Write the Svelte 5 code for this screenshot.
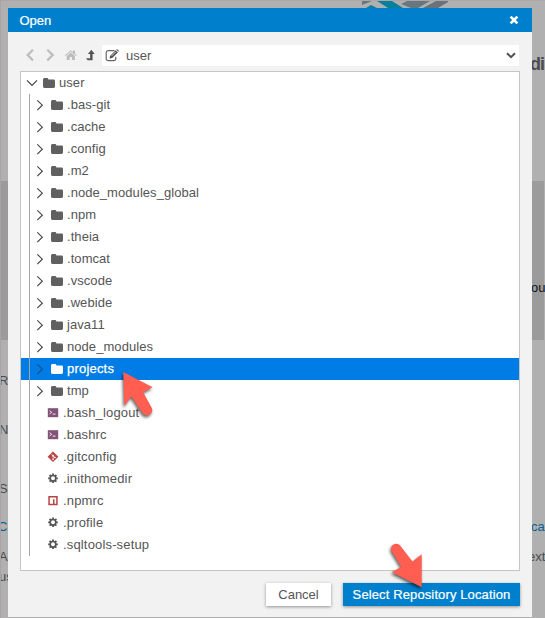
<script>
  const rows = [
    ['folder', '.bas-git'], ['folder', '.cache'], ['folder', '.config'], ['folder', '.m2'],
    ['folder', '.node_modules_global'], ['folder', '.npm'], ['folder', '.theia'], ['folder', '.tomcat'],
    ['folder', '.vscode'], ['folder', '.webide'], ['folder', 'java11'], ['folder', 'node_modules'],
    ['folder', 'projects'], ['folder', 'tmp'], ['shell', '.bash_logout'], ['shell', '.bashrc'],
    ['git', '.gitconfig'], ['gear', '.inithomedir'], ['npm', '.npmrc'], ['gear', '.profile'],
    ['gear', '.sqltools-setup']
  ];
  const selected = 'projects';
</script>

{#snippet folder()}
  <svg class="folder" width="12" height="11" viewBox="0 0 12 11"><path fill="currentColor" d="M0 1.5Q0 0 1.4 0H4Q5.2 0 5.3 1.2V1.4H10.6Q12 1.4 12 2.8V8.6Q12 10 10.6 10H1.4Q0 10 0 8.6Z" /></svg>
{/snippet}

<div class="page">
  <svg class="brand" width="86" height="7" viewBox="0 0 86 7">
    <path fill="#66777f" d="M0 0H10L0 4ZM45 0H68L56 7H49L39 3Z" />
    <path fill="#087f9b" d="M15 0H30L41 7H26ZM4 7L9 4L15 7Z" />
    <path fill="#69737d" d="M74 0H86V1L76 7H61Z" />
  </svg>
  <div class="band"></div>
  <span class="heading" style="left:530px;top:53px">di</span>
  <span class="dark" style="left:531px;top:280px">ou</span>
  <span style="left:-1px;top:373px">Re</span>
  <span style="left:-1px;top:422px">Ne</span>
  <span style="left:-1px;top:481px">Sa</span>
  <span class="link" style="left:-2px;top:519px">Cl</span>
  <span style="left:-1px;top:549px">A</span>
  <span style="left:-1px;top:569px">us</span>
  <span class="link" style="left:531px;top:519px">ca</span>
  <span style="left:528px;top:549px">ext</span>

  <section class="dialog">
    <header><span>Open</span>
      <svg width="10" height="10" viewBox="0 0 10 10"><path d="M1.6 1.6 8.4 8.4M8.4 1.6 1.6 8.4" stroke="#fff" stroke-width="2.7" /></svg>
    </header>
    <div class="content">
      <nav>
        <svg width="82" height="21" viewBox="0 0 82 21">
          <g fill="none" stroke="#bdbdbd" stroke-width="2.2"><path d="M13 4.8 7.6 10.1 13 15.4M27.3 4.8 32.7 10.1 27.3 15.4" /></g>
          <path fill="#bdbdbd" d="M44.8 10.3 50.8 5.3 53 7.1V5.6H55V8.8L56.8 10.3 56.1 11 50.8 6.6 45.5 11ZM46.7 11 50.8 7.6 54.9 11V15H52V12H49.7V15H46.7Z" />
          <path fill="#555" d="M71.3 4.7 74.8 9H72.6V15.2H67.7L66 13.2H70.1V9H67.9Z" />
        </svg>
        <div class="select">
          <svg width="15" height="13" viewBox="0 0 15 13"><path fill="none" stroke="#666" stroke-width="1.2" d="M9.5 1.6H3.5Q1.2 1.6 1.2 4V9.5Q1.2 11.7 3.5 11.7H8.5Q10.8 11.7 10.8 9.5V7.8" /><path fill="#555" d="M4.5 9.5 5 7 10.7 1.2 12.9 3.4 7.2 9ZM11.3.7 12 0 14 2 13.4 2.8Z" /><path stroke="white" stroke-width=".7" d="M6.5 7 10.5 3" /></svg>
          <span>user</span>
          <svg class="down" width="10" height="7" viewBox="0 0 10 7"><path d="M1 1.2 5 5.2 9 1.2" fill="none" stroke="#505050" stroke-width="2" /></svg>
        </div>
      </nav>
      <div class="tree">
        <div class="row root">
          <svg class="chev" width="12" height="10" viewBox="0 0 12 10"><path d="M1 2.4 6 7.5 11 2.4" fill="none" stroke="#444" stroke-width="1.15" /></svg>
          {@render folder()}<span>user</span>
        </div>
        <div class="children">
          {#each rows as [kind, name]}
            <div class="row" class:selected={name === selected} class:file={kind !== 'folder'}>
              {#if kind === 'folder'}
                <svg class="chev" width="8" height="12" viewBox="0 0 8 12"><path d="M1.3 1.3 6.3 6.2 1.3 11.1" fill="none" stroke={name === selected ? '#124f83' : '#444'} stroke-width="1.15" /></svg>
                {@render folder()}
              {:else}
                <svg class="icon" width="12" height="12" viewBox="0 0 12 12">
                  {#if kind === 'shell'}
                    <path fill="#835276" d="M.8 1.2H11.2V10.2H.8Z" /><path d="M2.6 3.6 4.7 5.3 2.6 6.9M5.6 7.1H8.5" fill="none" stroke="#eee" stroke-width="1" />
                  {:else if kind === 'git'}
                    <path fill="#b74343" d="M6 .4 11.4 5.7 6 11 .6 5.7Z" /><path d="M4.1 2.8 6.1 4.8V8.5M6.1 4.8 8 6.5" fill="none" stroke="#fff" stroke-width=".7" /><circle cx="6.1" cy="4.7" r=".9" fill="#fff" /><circle cx="8" cy="6.5" r=".8" fill="#fff" /><circle cx="6.1" cy="8.2" r=".8" fill="#fff" />
                  {:else if kind === 'npm'}
                    <path fill="#b74343" fill-rule="evenodd" d="M1.3 1H10.7V10.3H1.3ZM2.8 2.6V8.8H6V4.2H7.5V8.8H9.2V2.6Z" />
                  {:else}
                    <circle cx="6" cy="5.3" r="2.8" fill="none" stroke="#555" stroke-width="1.6" />
                    <path stroke="#555" stroke-width="1.8" d="M6 .5V2.5M6 8.1V10.1M1.2 5.3H3.2M8.8 5.3H10.8M2.6 1.9 4 3.3M8 7.3 9.4 8.7M9.4 1.9 8 3.3M4 7.3 2.6 8.7" />
                  {/if}
                </svg>
              {/if}
              <span>{name}</span>
            </div>
          {/each}
        </div>
      </div>
      <footer><button class="cancel">Cancel</button><button class="main">Select Repository Location</button></footer>
    </div>
  </section>

  <svg class="pointers" width="545" height="618" viewBox="0 0 545 618">
    <g fill="#ff5e51">
      <path d="M123.3 372 152.7 387.3 143.2 392.3 151.8 408C154.5 413.5 146.5 418.5 142.5 413L131.3 396.5 124.3 406Z" />
      <path d="M421.7 587.3 391.7 571.9 401.3 567 391.5 551C389 545 397 541 400.5 546L412.5 561.5 421.7 554.3Z" />
    </g>
  </svg>
</div>

<style>
  :global(body) { overflow: hidden; }
  .page { position: relative; width: 545px; height: 618px; overflow: hidden; box-sizing: border-box; background: #b0b0b0; border-left: 1px solid #ada1a1; border-top: 1px solid #b0a5a5; font-family: "Liberation Sans", Arial, sans-serif; font-size: 13px; color: #555; }
  .page > span { position: absolute; margin: -1px 0 0 -1px; line-height: 16px; color: #4c4c4c; }
  .page > .heading { font-size: 18px; line-height: 22px; font-weight: bold; letter-spacing: -1px; }
  .page > .dark { color: #111; }
  .page > .link { color: #095f8d; }
  .band { position: absolute; left: 0; top: 180px; width: 543px; height: 159px; background: #9b9b9b; }
  .brand { position: absolute; left: 361px; top: 0; }
  .dialog { position: absolute; left: 7px; top: 7px; width: 524px; height: 609px; background: #f2f2f2; }
  header { height: 24px; background: #007fcc; color: white; padding: 0 13px 0 11.5px; display: flex; align-items: center; justify-content: space-between; box-sizing: border-box; }
  header span { font-size: 13px; -webkit-text-stroke: .2px; }
  .content { padding: 13px 12px 0; }
  nav { display: flex; height: 21px; }
  .select { flex: 1; display: flex; align-items: center; margin-right: 1px; padding: 0 3px; background: #fff; }
  .select span { margin-left: 6px; }
  .select .down { margin-left: auto; }
  .tree { box-sizing: border-box; height: 500px; margin-top: 5px; border: 1px solid #c5c5c5; background: white; }
  .row { display: flex; height: 22px; align-items: center; line-height: 22px; white-space: nowrap; letter-spacing: .06px; }
  .root { padding-left: 5px; }
  .root .folder { margin-left: 5px; }
  .row .folder + span { margin-left: 4px; }
  .folder { color: #606060; flex: none; }
  .children { position: relative; }
  .children::after { content: ""; position: absolute; left: 8px; top: 0; width: 1px; height: 462px; background: #a5a5a5; }
  .children .row { padding-left: 15px; }
  .children .folder { margin-left: 7px; }
  .children .file { padding-left: 26px; letter-spacing: .16px; }
  .file span { margin-left: 4px; }
  .children .selected { background: #007ce6; color: white; letter-spacing: .2px; }
  .selected span { -webkit-text-stroke: .25px; }
  .selected .folder { color: white; }
  footer { display: flex; justify-content: flex-end; gap: 12px; margin-top: 12px; }
  button { height: 23px; padding: 0; border: 0; font: 13px "Liberation Sans", Arial, sans-serif; box-shadow: 0 1px 3px #0006; }
  .cancel { width: 65px; background: white; color: #555; }
  .main { width: 177px; background: #007fcc; color: white; letter-spacing: .12px; -webkit-text-stroke: .2px; }
  .pointers { position: absolute; left: -1px; top: -1px; filter: drop-shadow(-1px 2px 1.5px #0009); pointer-events: none; }
</style>
